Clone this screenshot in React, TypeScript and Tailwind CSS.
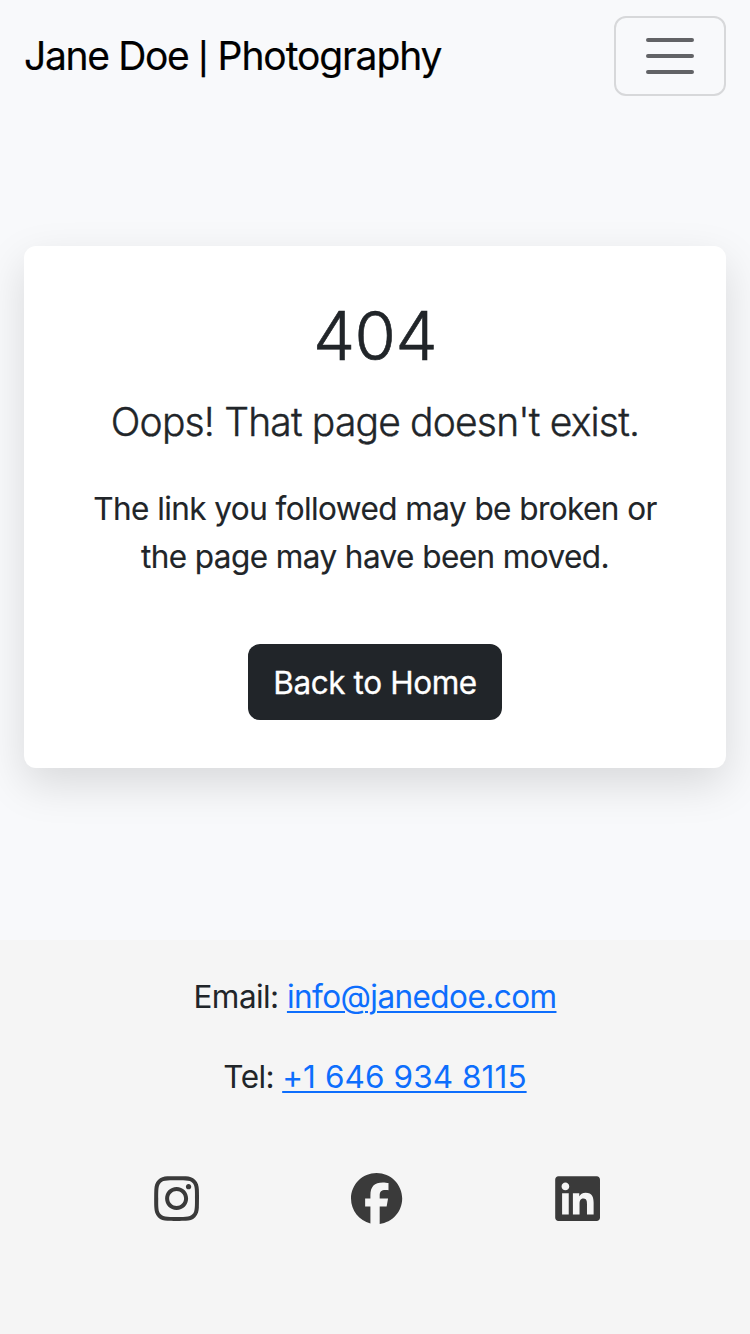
import { FaInstagram, FaFacebook, FaLinkedin } from "react-icons/fa6";

export default function App() {
  return (
    <div className="flex h-[1334px] w-[750px] flex-col overflow-hidden bg-[#f8f9fb] font-['Inter','Liberation_Sans',sans-serif] text-[#212529]">
      <header className="flex h-28 items-center justify-between px-6">
        <a href="#" className="flex items-baseline whitespace-pre pb-px text-[39px] leading-[60px] text-black [-webkit-text-stroke:0.2px_black]">
          <span className="tracking-[-1.35px]">Jane Doe </span>
          <span className="-mr-px text-[31px] font-medium leading-none">|</span>
          <span className="tracking-[-1.1px]"> Photography</span>
        </a>
        <button aria-label="Toggle navigation" className="flex h-20 w-28 items-center justify-center rounded-xl border-2 border-[#d7d8da]">
          <svg viewBox="0 0 30 30" className="size-[60px]" fill="none" stroke="#626366" strokeWidth="2" strokeLinecap="round" strokeMiterlimit="10">
            <path d="M4 7h22M4 15h22M4 23h22" />
          </svg>
        </button>
      </header>
      <main className="flex h-[828px] flex-col px-6 pt-[134px]">
        <section className="flex h-[522px] flex-col items-center rounded-xl bg-white pt-12 text-center shadow-[0_16px_44px_rgba(0,8,0,0.13)]">
          <h1 className="text-[67px] font-light leading-[84px] tracking-[-0.5px] [-webkit-text-stroke:0.6px_#212529]">404</h1>
          <p className="mt-[14px] whitespace-nowrap text-[39px] font-light leading-[60px] tracking-[-0.82px] [-webkit-text-stroke:0.4px_#212529]">Oops! That page doesn't exist.</p>
          <p className="mt-[33px] whitespace-nowrap text-[31.5px] leading-[48px] tracking-[-0.57px] [-webkit-text-stroke:0.15px_#212529]">The link you followed may be broken or<br />the page may have been moved.</p>
          <a href="#" className="mt-[63px] flex h-[76px] w-[254px] items-center justify-center whitespace-nowrap rounded-xl bg-[#212529] pt-0.5 text-[31.5px] tracking-[-0.4px] text-white [-webkit-text-stroke:0.3px_white]">Back to Home</a>
        </section>
      </main>
      <footer className="flex flex-1 flex-col items-center bg-[#f5f5f5] pt-[33px] text-[31.5px] leading-[48px]">
        <p className="whitespace-nowrap tracking-[-0.57px]">Email: <a href="#" className="text-[#0d6efd] underline decoration-2 underline-offset-[3px]">info@janedoe.com</a></p>
        <p className="mt-8 whitespace-nowrap"><span className="tracking-[-0.6px]">Tel: </span><a href="#" className="tracking-[0.08px] text-[#0d6efd] underline decoration-2 underline-offset-[3px]">+1 646 934 8115</a></p>
        <div className="ml-1 mt-[72px] grid w-[601px] grid-cols-3 justify-items-center text-[#3a3a3a]">
          <FaInstagram className="size-[51.2px]" />
          <FaFacebook className="size-[51.2px]" />
          <FaLinkedin className="size-[51.2px]" />
        </div>
      </footer>
    </div>
  );
}
